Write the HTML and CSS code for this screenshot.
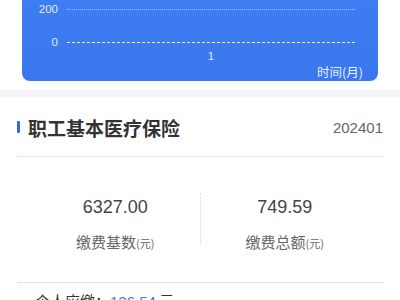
FILE: index.html
```html
<!DOCTYPE html>
<html lang="zh-CN">
<head>
<meta charset="utf-8">
<link rel="stylesheet" href="styles.css">
</head>
<body>
<div class="chart-wrap">
  <div class="chart">
    <div class="row">
      <span class="ylabel">200</span>
      <span class="grid-line dotted"></span>
    </div>
    <div class="row row-zero">
      <span class="ylabel">0</span>
      <span class="grid-line solid"></span>
    </div>
    <div class="xaxis">
      <span class="xtick">1</span>
    </div>
    <div class="xunit">时间(月)</div>
  </div>
</div>
<div class="band"></div>
<div class="section">
  <div class="title-row">
    <div class="title"><span class="mark"></span>职工基本医疗保险</div>
    <div class="period">202401</div>
  </div>
  <div class="stats">
    <div class="stat">
      <div class="num">6327.00</div>
      <div class="label">缴费基数<small>(元)</small></div>
    </div>
    <div class="divider"></div>
    <div class="stat">
      <div class="num">749.59</div>
      <div class="label">缴费总额<small>(元)</small></div>
    </div>
  </div>
  <div class="detail">个人应缴：<span class="money">126.54</span> 元</div>
</div>
</body>
</html>
```

FILE: styles.css
```css
* { box-sizing: border-box; }
body {
  margin: 0;
  background: #ffffff;
  font-family: "Liberation Sans", "Noto Sans CJK SC", sans-serif;
  overflow: hidden;
}
.chart-wrap {
  display: flow-root;
  padding: 0 22px;
  height: 90px;
}
.chart {
  margin-top: -24px;
  background: linear-gradient(#3e7ef2, #3a77ee);
  border-radius: 8px;
  padding: 25px 15px 1px 0;
  color: #fff;
}
.row {
  display: grid;
  grid-template-columns: 36px 288px;
  column-gap: 9px;
  align-items: center;
  height: 16px;
}
.row-zero { margin-top: 17px; }
.ylabel {
  text-align: right;
  font-size: 11.5px;
  color: rgba(255,255,255,0.88);
}
.grid-line { display: block; height: 0; }
.grid-line.dotted { border-top: 1px dotted rgba(255,255,255,0.55); }
.grid-line.solid { border-top: 1.5px dashed rgba(255,255,255,0.9); }
.xaxis {
  display: flex;
  justify-content: center;
  padding-left: 45px;
  width: 333px;
  height: 12px;
  line-height: 12px;
  font-size: 11.5px;
  color: rgba(255,255,255,0.9);
}
.xunit {
  margin-top: 2px;
  text-align: right;
  font-size: 12.5px;
  line-height: 16px;
  font-family: "Noto Sans CJK SC", sans-serif;
  color: rgba(255,255,255,0.92);
}
.band {
  height: 7px;
  background: #f4f5f7;
}
.section {
  padding: 0 17px;
}
.title-row {
  display: flex;
  justify-content: space-between;
  align-items: center;
  padding-top: 16px;
  padding-bottom: 15px;
  border-bottom: 1px dotted #cfcfcf;
}
.title {
  display: flex;
  align-items: center;
  height: 28px;
  font-family: "Noto Sans CJK SC", sans-serif;
  font-size: 19px;
  font-weight: 600;
  color: #333;
}
.mark {
  width: 3px;
  height: 12px;
  background: #2b6fd4;
  border-radius: 1px;
  margin-right: 8px;
}
.period {
  font-size: 15px;
  color: #666;
}
.stats {
  display: grid;
  grid-template-columns: 1fr 1px 1fr;
  padding: 38px 14px 29px;
  border-bottom: 1px dotted #cfcfcf;
}
.stat { text-align: center; }
.num {
  font-size: 18px;
  line-height: 24px;
  color: #444;
}
.label {
  margin-top: 13px;
  font-family: "Noto Sans CJK SC", sans-serif;
  font-size: 15px;
  line-height: 20px;
  color: #666;
}
.label small { font-size: 11px; }
.divider {
  margin-top: -2px;
  height: 52px;
  border-left: 1px dotted #d8d8d8;
}
.detail {
  padding: 8px 18px 0;
  font-family: "Noto Sans CJK SC", sans-serif;
  font-size: 15px;
  line-height: 20px;
  color: #333;
}
.money { color: #3a77ee; font-family: "Liberation Sans", sans-serif; }
```
